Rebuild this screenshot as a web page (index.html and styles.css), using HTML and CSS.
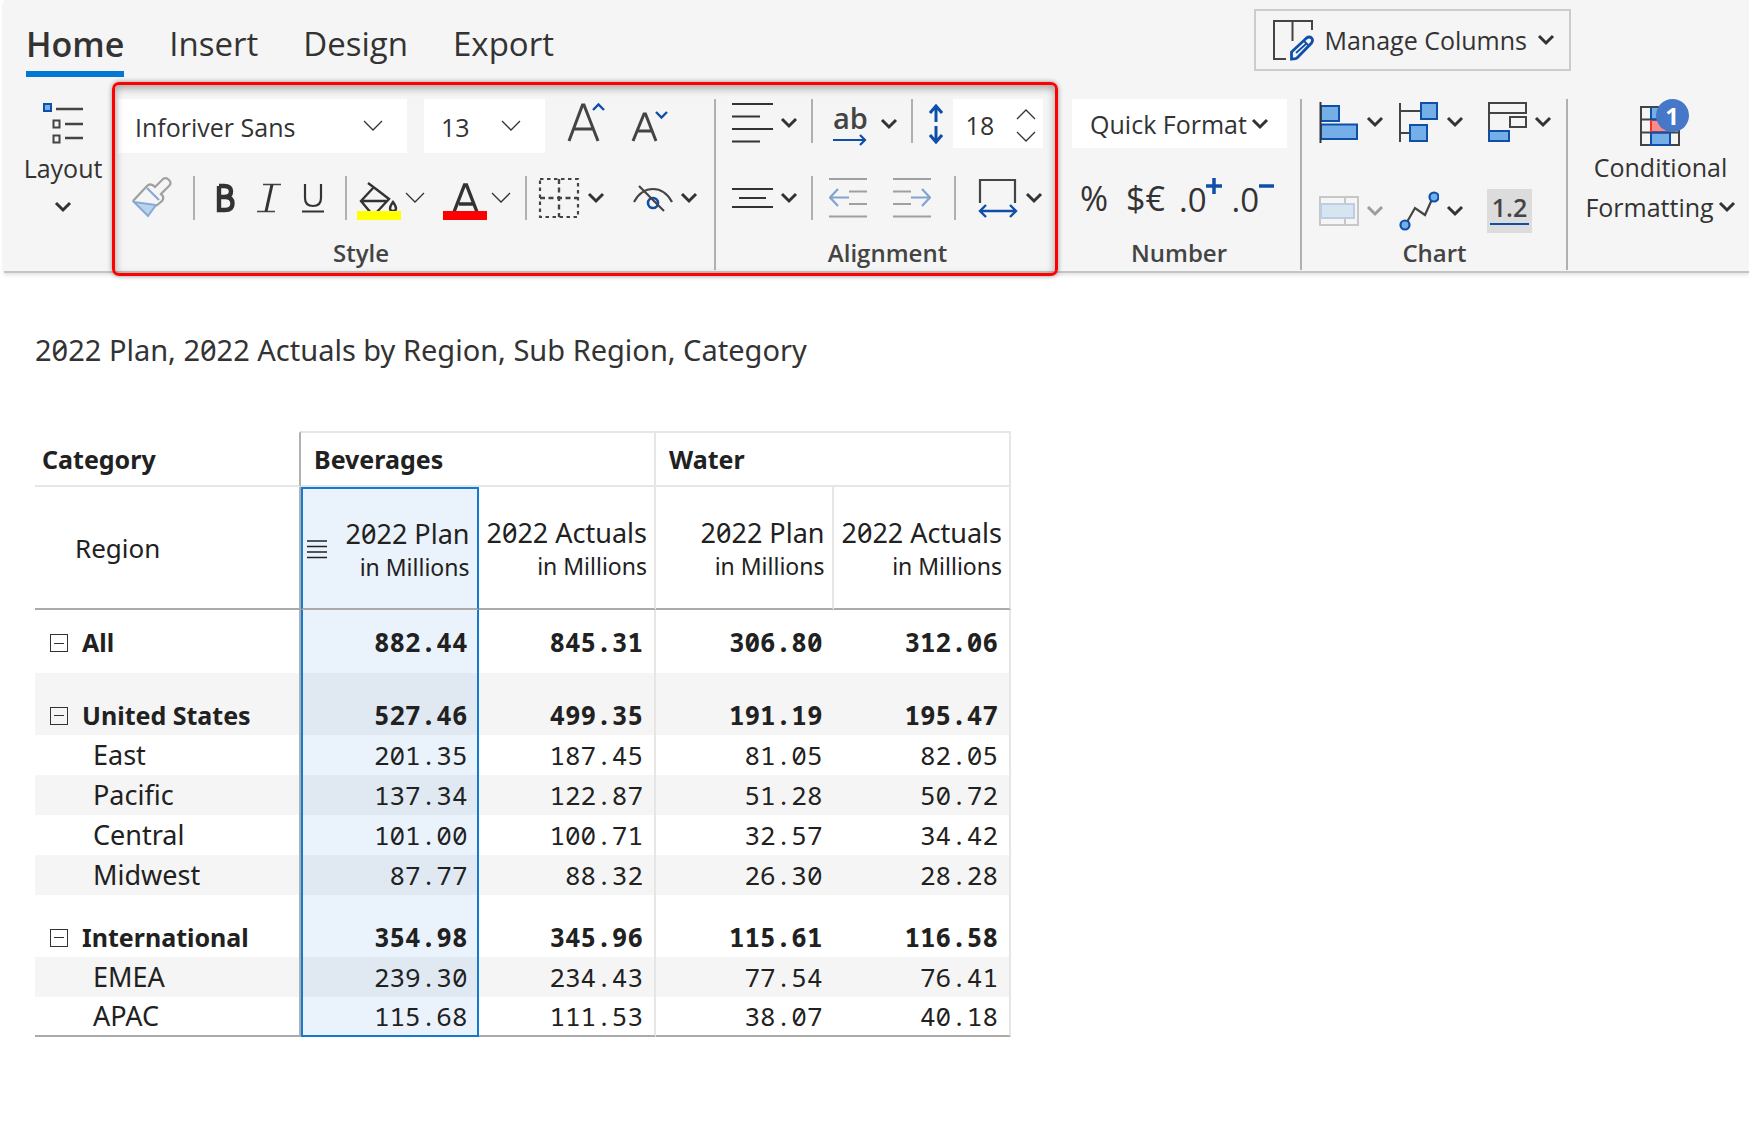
FILE: index.html
```html
<!DOCTYPE html>
<html lang="en">
<head>
<meta charset="utf-8">
<meta name="viewport" content="width=device-width, initial-scale=1">
<title>2022 Plan, 2022 Actuals by Region</title>
<link rel="stylesheet" href="styles.css">
</head>
<body>
<svg class="sprite" aria-hidden="true">
  <symbol id="chev" viewBox="0 0 18 12"><path d="M2 2l7 7 7-7" fill="none" stroke="#333" stroke-width="3"/></symbol>
  <symbol id="chev-thin" viewBox="0 0 20 12"><path d="M1 1l9 9 9-9" fill="none" stroke="#333" stroke-width="1.3"/></symbol>
</svg>

<header class="ribbon">
  <div class="topline">
    <nav class="tabs">
      <a class="tab active" href="#home">Home</a>
      <a class="tab" href="#insert">Insert</a>
      <a class="tab" href="#design">Design</a>
      <a class="tab" href="#export">Export</a>
    </nav>
    <button class="manage" type="button">
      <svg width="42" height="42" viewBox="0 0 42 42" fill="none"><path d="M14 40H2V2h38v9M20.500 2v20" stroke="#444" stroke-width="2"/><path d="M19.500 40v-7l15-14q3-2 5 0t0 5L25 39q-1 1-5.500 1z" stroke="#0f4fa8" stroke-width="2.800"/><path d="M24 34l11-10M32 22l4 4" stroke="#0f4fa8" stroke-width="1.800"/></svg>
      <span>Manage Columns</span>
      <svg class="chev"><use href="#chev"/></svg>
    </button>
  </div>

  <div class="toolbar">
    <button class="stack layout" type="button">
      <svg width="42" height="46" viewBox="0 0 42 46" fill="none"><rect x="2" y="2" width="7" height="7" fill="#74afe8" stroke="#0f4fa8" stroke-width="2"/><path d="M14 7h27M23 22h18M23 36h18" stroke="#444" stroke-width="2.4"/><path d="M11.500 18.500h6v7h-6zM11.500 33.500h6v7h-6z" stroke="#444" stroke-width="2"/></svg>
      <span>Layout</span>
      <svg class="chev"><use href="#chev"/></svg>
    </button>

    <div class="marked">
      <section class="group style">
        <div class="row top">
          <label class="pick font"><select aria-label="Font"><option>Inforiver Sans</option></select><svg class="thin"><use href="#chev-thin"/></svg></label>
          <label class="pick size"><select aria-label="Font size"><option>13</option></select><svg class="thin"><use href="#chev-thin"/></svg></label>
          <button class="glyph" type="button" aria-label="Increase font size"><svg width="38" height="40" viewBox="0 0 38 40" fill="none"><path d="M2 39L15.500 3h1.500L31 39M7 27h20" stroke="#444" stroke-width="3"/><path d="M26 8l5.500-5.500L37 8" stroke="#0f4fa8" stroke-width="2.400"/></svg></button>
          <button class="glyph" type="button" aria-label="Decrease font size"><svg width="42" height="40" viewBox="0 0 42 40" fill="none"><path d="M6 39L17 12h1.500L29 39M10 29h15" stroke="#444" stroke-width="3"/><path d="M29 10l5.500 5.500L40 10" stroke="#0f4fa8" stroke-width="2.400"/></svg></button>
        </div>
        <div class="row lower">
          <div class="cluster text-tools">
            <button class="glyph" type="button" aria-label="Format painter"><svg width="40" height="42" viewBox="0 0 40 42" fill="none"><path d="M2 25l22 3-8 11z" fill="#b8d3ee" stroke="#87a9d6" stroke-width="2"/><path d="M1 24L15 9q3-3 7 0l1 1 8-8q3-2 6 1t0 6l-8 8q4 3 1 7l-6 5" stroke="#a0a0a0" stroke-width="2.200"/><path d="M15 11l12 12" stroke="#87a9d6" stroke-width="2.200"/></svg></button>
            <i class="sep"></i>
            <button class="glyph" type="button" aria-label="Bold"><svg width="20" height="30" viewBox="0 0 20 30" fill="none"><path d="M3 3v24h6q7.500 0 7.500-6.500T9 14H3M3 3h5q7 0 7 5.500T8 14" stroke="#333" stroke-width="4.400"/></svg></button>
            <button class="glyph" type="button" aria-label="Italic"><svg width="24" height="30" viewBox="0 0 24 30" fill="none"><path d="M6 1.500h18M0 28.500h18" stroke="#444" stroke-width="1.600"/><path d="M15 1.500l-6 27" stroke="#333" stroke-width="3"/></svg></button>
            <button class="glyph" type="button" aria-label="Underline"><svg width="22" height="30" viewBox="0 0 22 30" fill="none"><path d="M3 1v14q0 8 8 8t8-8V1" stroke="#333" stroke-width="2.200"/><path d="M0 28.500h22" stroke="#333" stroke-width="2"/></svg></button>
            <i class="sep"></i>
          </div>
          <div class="cluster color-tools">
            <button class="glyph combo" type="button" aria-label="Fill color"><svg width="44" height="44" viewBox="0 0 44 44" fill="none"><path d="M11 7l8 6 13 10-13 14M14 37L4 25 17 11M5 25h26" stroke="#333" stroke-width="2.400"/><path d="M36 26q-3 4-3 6.500t3 2.500 3-2.500-3-6.500z" stroke="#333" stroke-width="2.400"/><path d="M0 35h44v9H0z" fill="#ff0"/></svg><svg class="thin"><use href="#chev-thin"/></svg></button>
            <button class="glyph combo" type="button" aria-label="Font color"><svg width="44" height="44" viewBox="0 0 44 44" fill="none"><path d="M11 36L21.500 9h2L34 36M16 28h14" stroke="#333" stroke-width="3.400"/><path d="M0 35h44v9H0z" fill="#f00"/></svg><svg class="thin"><use href="#chev-thin"/></svg></button>
          </div>
          <i class="sep"></i>
          <div class="cluster border-tools">
            <button class="glyph combo wide" type="button" aria-label="Borders"><svg width="42" height="42" viewBox="0 0 42 42" fill="none"><path d="M2 2h38v38H2z" stroke="#444" stroke-width="2.200" stroke-dasharray="3.500 3.500"/><path d="M21 2v38M2 21h38" stroke="#444" stroke-width="2.400" stroke-dasharray="5 3.500"/></svg><svg class="chev"><use href="#chev"/></svg></button>
            <button class="glyph combo wide" type="button" aria-label="Hide"><svg width="40" height="34" viewBox="0 0 40 34" fill="none"><circle cx="20" cy="22" r="5" stroke="#0f4fa8" stroke-width="2.600"/><path d="M1 21Q8 8 20 8t19 13M6 5l25 25" stroke="#444" stroke-width="2.200"/></svg><svg class="chev"><use href="#chev"/></svg></button>
          </div>
        </div>
        <h2>Style</h2>
      </section>

      <section class="group alignment">
        <div class="row top">
          <button class="glyph combo" type="button" aria-label="Horizontal align"><svg width="42" height="42" viewBox="0 0 42 42"><path d="M0 2h41M0 14.500h28M0 27h41M0 39.500h28" stroke="#333" stroke-width="2"/></svg><svg class="chev"><use href="#chev"/></svg></button>
          <i class="sep"></i>
          <button class="glyph combo wrap" type="button"><span class="ab">ab<svg width="34" height="12" viewBox="0 0 34 12" fill="none"><path d="M0 6h32M27 1l5 5-5 5" stroke="#0f4fa8" stroke-width="2.200"/></svg></span><svg class="chev"><use href="#chev"/></svg></button>
          <i class="sep"></i>
          <svg class="height-icon" width="14" height="40" viewBox="0 0 14 40" fill="none"><path d="M7 2v16M7 22v16M1 9l6-7 6 7M1 31l6 7 6-7" stroke="#0f4fa8" stroke-width="3"/></svg>
          <div class="spin">
            <input type="text" inputmode="numeric" value="18" aria-label="Row height">
            <span class="steps">
              <button type="button" aria-label="Increase"><svg class="thin up"><use href="#chev-thin"/></svg></button>
              <button type="button" aria-label="Decrease"><svg class="thin"><use href="#chev-thin"/></svg></button>
            </span>
          </div>
        </div>
        <div class="row lower">
          <button class="glyph combo" type="button" aria-label="Vertical align"><svg width="42" height="22" viewBox="0 0 42 22"><path d="M0 2h41M7 11h27M0 20h41" stroke="#333" stroke-width="2"/></svg><svg class="chev"><use href="#chev"/></svg></button>
          <i class="sep"></i>
          <div class="cluster indents">
            <button class="glyph" type="button" aria-label="Decrease indent"><svg width="38" height="42" viewBox="0 0 38 42" fill="none"><path d="M0 2h38M20 14.500h18M20 27h18M0 39.500h38" stroke="#a0a0a0" stroke-width="2.200"/><path d="M20 20.500H2M9 12l-8 8.500L9 29" stroke="#82a3d2" stroke-width="2.200"/></svg></button>
            <button class="glyph" type="button" aria-label="Increase indent"><svg width="38" height="42" viewBox="0 0 38 42" fill="none"><path d="M0 2h38M0 14.500h18M0 27h18M0 39.500h38" stroke="#a0a0a0" stroke-width="2.200"/><path d="M18 20.500h18M29 12l8 8.500L29 29" stroke="#82a3d2" stroke-width="2.200"/></svg></button>
          </div>
          <i class="sep"></i>
          <button class="glyph combo wide" type="button" aria-label="Column width"><svg width="40" height="42" viewBox="0 0 40 42" fill="none"><path d="M2 26V3h35v23" stroke="#444" stroke-width="2.200"/><path d="M2 34h36M8 28l-6 6 6 6M32 28l6 6-6 6" stroke="#0f4fa8" stroke-width="2.400"/></svg><svg class="chev"><use href="#chev"/></svg></button>
        </div>
        <h2>Alignment</h2>
      </section>
    </div>

    <section class="group number">
      <div class="row top">
        <button class="quick" type="button"><span>Quick Format</span><svg class="chev"><use href="#chev"/></svg></button>
      </div>
      <div class="row lower">
        <button class="glyph sign" type="button">%</button>
        <button class="glyph sign" type="button">$€</button>
        <div class="cluster decimals">
          <button class="glyph sign dec" type="button">.0<svg width="16" height="16" viewBox="0 0 16 16"><path d="M8 0v16M0 8h16" stroke="#0f4fa8" stroke-width="3.500"/></svg></button>
          <button class="glyph sign dec" type="button">.0<svg width="16" height="16" viewBox="0 0 16 16"><path d="M1 8h15" stroke="#0f4fa8" stroke-width="3.500"/></svg></button>
        </div>
      </div>
      <h2>Number</h2>
    </section>

    <section class="group chart">
      <div class="chart-grid">
        <button class="glyph combo wide" type="button" aria-label="Bar chart"><svg width="40" height="42" viewBox="0 0 40 42" fill="#74afe8"><path d="M2 5h18v15H2zM2 23.500h36V38H2z" stroke="#0f4fa8" stroke-width="2"/><path d="M1.500 1v41" stroke="#333" stroke-width="2"/></svg><svg class="chev"><use href="#chev"/></svg></button>
        <button class="glyph combo wide" type="button" aria-label="Variance chart"><svg width="40" height="42" viewBox="0 0 40 42" fill="#74afe8"><path d="M1 2v39M1 10h22M1 32h10" stroke="#444" stroke-width="2"/><path d="M22 2h16v16H22zM11 24h17v16H11z" stroke="#0f4fa8" stroke-width="2"/></svg><svg class="chev"><use href="#chev"/></svg></button>
        <button class="glyph combo wide" type="button" aria-label="Stacked chart"><svg width="40" height="42" viewBox="0 0 40 42" fill="none"><path d="M2 41V2h37v10H2M23 16h16v10H23z" stroke="#444" stroke-width="2"/><path d="M2 30h20v10H2z" fill="#74afe8" stroke="#0f4fa8" stroke-width="2"/></svg><svg class="chev"><use href="#chev"/></svg></button>
        <button class="glyph combo wide" type="button" aria-label="Column settings" disabled><svg width="40" height="30" viewBox="0 0 40 30" fill="none"><path d="M1 1h38v28H1zM26 1v28" stroke="#909090" stroke-width="2"/><path d="M2 8h33v14H2z" fill="#b4d2ee" stroke="#78a0d2" stroke-width="2"/></svg><svg class="chev"><use href="#chev"/></svg></button>
        <button class="glyph combo wide" type="button" aria-label="Line chart"><svg width="40" height="42" viewBox="0 0 40 42" fill="none"><path d="M8 32l8-14 10 7 8-18" stroke="#444" stroke-width="2.200"/><g fill="#74afe8" stroke="#0f4fa8" stroke-width="2.200"><circle cx="6" cy="35" r="4.500"/><circle cx="35" cy="7" r="4.500"/></g></svg><svg class="chev"><use href="#chev"/></svg></button>
        <button class="glyph labels" type="button" aria-pressed="true">1.2</button>
      </div>
      <h2>Chart</h2>
    </section>

    <button class="stack conditional" type="button">
      <span class="badged"><svg width="42" height="42" viewBox="0 0 42 42" fill="none"><path d="M11 2h19v12H11zM11 28h19v12H11z" fill="#74afe8"/><path d="M11 14h19v14H11z" fill="#ff8a8a"/><path d="M1 2h38v38H1zM1 14.500h38M1 27.500h38" stroke="#444" stroke-width="2"/><path d="M11 2v12M11 28v12h19V28M11 27.500h19M11 14.500h19" stroke="#0f4fa8" stroke-width="2"/><path d="M11 15v12M30 15v12" stroke="#e33" stroke-width="2"/></svg><b class="badge">1</b></span>
      <span>Conditional</span>
      <span class="with-chev">Formatting<svg class="chev"><use href="#chev"/></svg></span>
    </button>
  </div>
</header>

<main class="report">
  <h1>2022 Plan, 2022 Actuals by Region, Sub Region, Category</h1>
  <table class="matrix">
    <colgroup><col class="c-name"><col class="c-val"><col class="c-val"><col class="c-val"><col class="c-val"></colgroup>
    <thead>
      <tr class="cats"><th scope="col" class="name">Category</th><th colspan="2" scope="colgroup" class="end">Beverages</th><th colspan="2" scope="colgroup" class="end">Water</th></tr>
      <tr class="cols"><th scope="col" class="name">Region</th>
        <th scope="col" class="sel"><div class="head"><svg width="20" height="20" viewBox="0 0 20 20"><path d="M0 2h20M0 7.500h20M0 13h20M0 18.500h20" stroke="#222" stroke-width="1.300"/></svg><span>2022 Plan<small>in Millions</small></span></div></th>
        <th scope="col" class="end">2022 Actuals<small>in Millions</small></th>
        <th scope="col" class="mid">2022 Plan<small>in Millions</small></th>
        <th scope="col" class="end">2022 Actuals<small>in Millions</small></th></tr>
    </thead>
    <tbody>
      <tr class="total all"><th scope="row" class="name"><button class="fold" type="button" aria-label="Collapse All"></button>All</th><td class="sel">882.44</td><td class="end">845.31</td><td>306.80</td><td class="end">312.06</td></tr>
      <tr class="total alt"><th scope="row" class="name"><button class="fold" type="button" aria-label="Collapse United States"></button>United States</th><td class="sel">527.46</td><td class="end">499.35</td><td>191.19</td><td class="end">195.47</td></tr>
      <tr><th scope="row" class="name">East</th><td class="sel">201.35</td><td class="end">187.45</td><td>81.05</td><td class="end">82.05</td></tr>
      <tr class="alt"><th scope="row" class="name">Pacific</th><td class="sel">137.34</td><td class="end">122.87</td><td>51.28</td><td class="end">50.72</td></tr>
      <tr><th scope="row" class="name">Central</th><td class="sel">101.00</td><td class="end">100.71</td><td>32.57</td><td class="end">34.42</td></tr>
      <tr class="alt"><th scope="row" class="name">Midwest</th><td class="sel">87.77</td><td class="end">88.32</td><td>26.30</td><td class="end">28.28</td></tr>
      <tr class="total"><th scope="row" class="name"><button class="fold" type="button" aria-label="Collapse International"></button>International</th><td class="sel">354.98</td><td class="end">345.96</td><td>115.61</td><td class="end">116.58</td></tr>
      <tr class="alt"><th scope="row" class="name">EMEA</th><td class="sel">239.30</td><td class="end">234.43</td><td>77.54</td><td class="end">76.41</td></tr>
      <tr class="last"><th scope="row" class="name">APAC</th><td class="sel">115.68</td><td class="end">111.53</td><td>38.07</td><td class="end">40.18</td></tr>
    </tbody>
  </table>
</main>
</body>
</html>
```

FILE: styles.css
```css
* { box-sizing: border-box; }

body {
  margin: 0;
  background: #fff;
  color: #333;
  font-family: "Open Sans", "Noto Sans", sans-serif;
  font-size: 25px;
  overflow-x: hidden;
}

button, input, select {
  margin: 0;
  padding: 0;
  border: 0;
  background: none;
  color: inherit;
  font: inherit;
}

svg { display: block; flex: none; }
.sprite { position: absolute; width: 0; height: 0; }
.chev { width: 18px; height: 12px; }
.thin { width: 20px; height: 12px; }
.up { transform: rotate(180deg); }

/* Ribbon */
.ribbon {
  margin-left: 4px;
  background: #f5f5f5;
  border-bottom: 2px solid #c4c4c4;
  box-shadow: 0 2px 4px rgba(0, 0, 0, .12);
}

.topline {
  display: flex;
  justify-content: space-between;
  align-items: flex-start;
  height: 82px;
  padding: 9px 178px 0 22px;
}

.tabs { display: flex; gap: 45px; padding-top: 8px; }
.tab {
  height: 60px;
  color: #333;
  font-size: 33px;
  line-height: 54px;
  text-decoration: none;
}
.tab.active { border-bottom: 6px solid #0078d4; font-size: 34px; font-weight: 600; }

.manage {
  display: flex;
  align-items: center;
  gap: 10px;
  height: 62px;
  padding: 0 14px 0 16px;
  border: 2px solid #ccc;
}

.toolbar { display: flex; height: 189px; padding-top: 17px; }

.stack {
  display: flex;
  flex-direction: column;
  align-items: center;
  justify-content: flex-start;
  line-height: 40px;
}
.layout { width: 108px; padding: 3px 0 0 10px; }
.layout .chev { margin-top: 13px; }
.conditional { flex: 1; padding: 6px 0 0 4px; }
.with-chev { display: flex; align-items: center; gap: 4px; }
.badged { position: relative; }
.badge {
  position: absolute;
  top: -6px;
  left: 16px;
  width: 33px;
  height: 33px;
  border-radius: 50%;
  background: #4677c8;
  color: #fff;
  font-size: 24px;
  line-height: 33px;
}

.marked { position: relative; display: flex; }
.marked::after {
  content: "";
  position: absolute;
  inset: -17px 0 -5px 0;
  border: 3px solid #f00;
  border-radius: 7px;
  box-shadow: 0 0 5px rgba(0, 0, 0, .4), inset 0 3px 8px rgba(0, 0, 0, .35);
  pointer-events: none;
}

.group {
  display: flex;
  flex-direction: column;
  height: 171px;
  border-right: 2px solid #b0b0b0;
}
.group h2 {
  margin: 0;
  color: #444;
  font-size: 24px;
  font-weight: 600;
  line-height: 34px;
  text-align: center;
}
.row { display: flex; align-items: center; }
.row.top { height: 54px; align-items: flex-start; }
.row.lower { height: 46px; margin: 22px 0 15px; }
.cluster { display: flex; align-items: center; }
.sep { width: 2px; height: 44px; background: #b0b0b0; flex: none; }
.glyph { display: flex; align-items: center; }
.combo { gap: 6px; }
.combo.wide { gap: 7px; }

.style { width: 604px; padding-left: 6px; }
.style h2 { padding-right: 110px; }
.style .top { gap: 22px; }
.style .lower { padding-left: 14px; }
.style .top .glyph { padding-top: 3px; }
.pick { display: grid; height: 54px; background: #fff; align-items: center; }
.pick select, .pick svg { grid-area: 1 / 1; }
.pick select { appearance: none; width: 100%; height: 54px; padding: 2px 0 0 17px; }
.pick svg { justify-self: end; margin-right: 24px; pointer-events: none; }
.pick.font { width: 289px; }
.pick.size { width: 121px; margin-left: -5px; }
.text-tools { gap: 21px; }
.color-tools { gap: 18px; padding: 0 14px 0 10px; }
.color-tools .combo { gap: 4px; }
.border-tools { gap: 28px; padding-left: 11px; }

.alignment { width: 342px; padding: 0 15px 0 16px; border-right: 0; }
.alignment .sep { margin: 0 16px 0 13px; }
.alignment .top > .combo { margin-top: 3px; }
.alignment .wide { padding-left: 6px; }
.height-icon { margin-top: 5px; }
.indents { gap: 26px; padding-right: 10px; }
.combo.wrap { gap: 12px; padding-left: 4px; }
.ab {
  display: flex;
  flex-direction: column;
  color: #444;
  font-size: 29px;
  font-weight: 600;
  line-height: 32px;
}
.spin {
  display: flex;
  align-items: center;
  width: 90px;
  height: 49px;
  margin-left: 10px;
  padding-top: 3px;
  background: #fff;
}
.spin input { width: 54px; text-align: center; }
.steps { display: flex; flex-direction: column; gap: 11px; margin-left: 9px; }

.number { width: 244px; padding-left: 14px; }
.number h2 { padding-right: 14px; }
.quick {
  display: flex;
  align-items: center;
  justify-content: center;
  gap: 4px;
  width: 215px;
  height: 49px;
  background: #fff;
}
.number .lower { gap: 18px; padding-left: 8px; }
.decimals { gap: 10px; margin-left: -4px; }
.sign { font-size: 34px; line-height: 46px; }
.dec { align-items: flex-start; height: 54px; font-size: 33px; line-height: 58px; }
.dec svg { margin: 7px 0 0 -1px; }

.chart { width: 266px; padding: 2px 0 0 17px; }
.chart h2 { padding-right: 16px; }
.chart-grid {
  display: grid;
  grid-template-columns: 80px 88px 80px;
  grid-template-rows: 42px 44px;
  row-gap: 46px;
  align-items: center;
  margin-bottom: 3px;
}
.chart-grid :disabled { opacity: .45; }
.labels {
  justify-content: center;
  width: 45px;
  height: 44px;
  border: solid #dcdcdc;
  border-width: 0 3px 8px;
  background: #dcdcdc;
  box-shadow: inset 0 -2px #0f4fa8;
  color: #444;
  font-weight: 600;
  line-height: 36px;
}

/* Report */
.report {
  padding: 55px 35px;
  color: #212121;
  font-family: "Noto Sans", "Open Sans", sans-serif;
  font-feature-settings: "zero";
}
.report h1 {
  margin: 0 0 59px;
  color: #333;
  font-size: 29px;
  font-weight: 400;
  line-height: 44px;
}

.matrix {
  width: 976px;
  table-layout: fixed;
  border-collapse: separate;
  border-spacing: 0;
  font-size: 27px;
  line-height: 36px;
}
.c-name { width: 266px; }
.matrix th { font-weight: 400; }
.matrix th, .matrix td { padding: 0 8px; text-align: right; }
.matrix .name { border-right: 2px solid #b0b0b0; text-align: left; }
.matrix .end { border-right: 2px solid #e6e6e6; }
.matrix .mid { border-right: 2px solid #e6e6e6; }

.matrix .cats th {
  height: 56px;
  border-top: 2px solid #e6e6e6;
  border-bottom: 2px solid #e6e6e6;
  padding-left: 13px;
  font-size: 25px;
  font-weight: 700;
  text-align: left;
}
.matrix .cats .name { padding-left: 7px; border-top-color: transparent; }
.matrix .cols th { height: 123px; padding-right: 7px; border-bottom: 2px solid #aaa; }
.matrix .cols .name { padding: 0 0 0 40px; font-size: 26px; }
.matrix small { display: block; font-size: 23px; line-height: 30px; }
.head { display: flex; align-items: center; justify-content: space-between; }

.matrix td {
  padding-right: 11px;
  font-family: "Noto Sans Mono", "DejaVu Sans Mono", monospace;
  font-size: 26px;
}
.matrix tbody th, .matrix tbody td { height: 40px; padding-bottom: 1px; }
.matrix tbody .name { padding-left: 58px; }
.matrix .total .name { padding-left: 15px; font-size: 25px; }
.matrix .total th, .matrix .total td { height: 62px; padding-top: 22px; font-weight: 700; }
.matrix .all th, .matrix .all td { height: 63px; padding-top: 2px; }
.alt { background: #f5f5f5; }
.matrix .last th, .matrix .last td { border-bottom: 2px solid #aaa; }

.matrix .sel {
  padding-right: 9px;
  border-left: 2px solid #1379d3;
  border-right: 2px solid #1379d3;
  background: rgba(20, 115, 220, .09);
}
.matrix .cols .sel { border-top: 2px solid #1379d3; padding-left: 4px; }
.matrix .last .sel { border-bottom-color: #1379d3; }

.fold {
  display: inline-block;
  width: 18px;
  height: 18px;
  margin-right: 14px;
  border: 1px solid #333;
  background: linear-gradient(#333, #333) center / 10px 1px no-repeat;
  vertical-align: 1px;
}
```
